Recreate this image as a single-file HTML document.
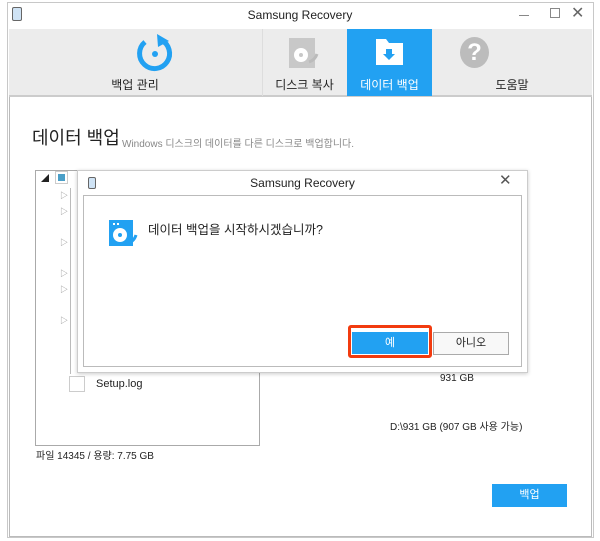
<!DOCTYPE html>
<html><head><meta charset="utf-8"><style>
*{margin:0;padding:0;box-sizing:border-box}
body{width:600px;height:541px;background:#fff;font-family:"Liberation Sans","Noto Sans CJK KR",sans-serif;position:relative;overflow:hidden;color:#222}
.a{position:absolute}
.t{font-size:12px;white-space:nowrap}
.tri{position:absolute;left:60px;font-size:8px;color:#888}
.st{position:absolute;left:70px;width:5px;height:1px;background:#999}
</style></head><body>
<div class="a" style="left:7px;top:2px;width:587px;height:536px;border:1px solid #c8c8c8;background:#fff"></div>
<div class="a" style="left:12px;top:7px;width:10px;height:14px;border:1px solid #666;border-radius:2px;background:#cfe3f5"></div>
<div class="a t" style="left:0;width:600px;text-align:center;top:8px;font-size:12px">Samsung Recovery</div>
<div class="a" style="left:519px;top:15px;width:10px;height:1px;background:#888"></div>
<div class="a" style="left:550px;top:8px;width:10px;height:10px;border:1px solid #888"></div>
<div class="a t" style="left:571px;top:3px;font-size:16px;color:#666">✕</div>
<div class="a" style="left:9px;top:29px;width:583px;height:508px;border:1px solid #bbb;background:#fff"></div>
<div class="a" style="left:9px;top:29px;width:583px;height:68px;background:#ececec;border-bottom:2px solid #ccc"></div>
<div class="a" style="left:262px;top:29px;width:1px;height:67px;background:#ddd"></div>
<div class="a" style="left:347px;top:29px;width:85px;height:67px;background:#22a1f2"></div>
<svg class="a" style="left:133px;top:34px" width="44" height="40" viewBox="0 0 44 40"><path d="M12 8 A15 15 0 1 0 28 6" fill="none" stroke="#22a1f2" stroke-width="5"/><path d="M24 0 L36 7 L25 13Z" fill="#22a1f2"/><circle cx="22" cy="20" r="3" fill="#22a1f2"/></svg>
<div class="a t" style="left:0;width:270px;text-align:center;top:76px;font-size:12px">백업 관리</div>
<svg class="a" style="left:289px;top:38px" width="32" height="32"><rect x="0" y="0" width="26" height="30" fill="#c8c8c8"/><circle cx="12" cy="17" r="7" fill="#fff"/><circle cx="12" cy="17" r="2" fill="#c8c8c8"/><path d="M20 24 q6 -2 8 -8" stroke="#bbb" stroke-width="3" fill="none"/></svg>
<div class="a t" style="left:262px;width:85px;text-align:center;top:76px;font-size:12px">디스크 복사</div>
<svg class="a" style="left:375px;top:37px" width="30" height="30"><path d="M1 2 h10 l3 4 h14 v22 h-27z" fill="#fff"/><path d="M11 12 h6 v5 h3 l-6 6 l-6 -6 h3z" fill="#22a1f2"/></svg>
<div class="a t" style="left:347px;width:85px;text-align:center;top:76px;font-size:12px;color:#fff">데이터 백업</div>
<div class="a" style="left:460px;top:37px;width:29px;height:31px;border-radius:50%;background:#bcbcbc;color:#fff;font-weight:bold;font-size:24px;text-align:center;line-height:31px">?</div>
<div class="a t" style="left:432px;width:160px;text-align:center;top:76px;font-size:12px">도움말</div>
<div class="a t" style="left:32px;top:124px;font-size:18px">데이터 백업</div>
<div class="a t" style="left:122px;top:135px;font-size:10px;color:#888">Windows 디스크의 데이터를 다른 디스크로 백업합니다.</div>
<div class="a" style="left:35px;top:170px;width:225px;height:276px;border:1px solid #aaa"></div>
<div class="a" style="left:55px;top:171px;width:13px;height:13px;border:1px solid #ccc;background:#fff"></div>
<div class="a" style="left:58px;top:174px;width:7px;height:7px;background:#4a9fc8"></div>
<div class="a t" style="left:41px;top:173px;font-size:8px">◢</div>
<div class="tri" style="top:190px">▷</div><div class="tri" style="top:206px">▷</div><div class="tri" style="top:237px">▷</div><div class="tri" style="top:268px">▷</div><div class="tri" style="top:284px">▷</div><div class="tri" style="top:315px">▷</div>
<div class="a" style="left:70px;top:188px;width:1px;height:186px;background:#bbb"></div>
<div class="a" style="left:69px;top:376px;width:16px;height:16px;border:1px solid #ccc"></div>
<div class="a t" style="left:96px;top:378px;font-size:11px">Setup.log</div>
<div class="a t" style="left:36px;top:447px;font-size:10px">파일 14345 / 용량: 7.75 GB</div>
<div class="a t" style="left:440px;top:373px;font-size:10px">931 GB</div>
<div class="a t" style="left:390px;top:418px;font-size:10px">D:\931 GB (907 GB 사용 가능)</div>
<div class="a t" style="left:492px;top:484px;width:75px;height:23px;background:#22a1f2;color:#fff;font-size:11px;text-align:center;line-height:23px">백업</div>
<div class="a" style="left:77px;top:170px;width:451px;height:203px;background:#fff;border:1px solid #ccc;box-shadow:0 1px 4px rgba(0,0,0,.2)"></div>
<div class="a" style="left:88px;top:177px;width:8px;height:12px;border:1px solid #666;border-radius:2px;background:#cfe3f5"></div>
<div class="a t" style="left:77px;width:451px;text-align:center;top:176px;font-size:12px">Samsung Recovery</div>
<div class="a t" style="left:499px;top:171px;font-size:15px;color:#555">✕</div>
<div class="a" style="left:83px;top:195px;width:439px;height:172px;border:1px solid #bbb"></div>
<svg class="a" style="left:109px;top:220px" width="30" height="28"><rect width="24" height="26" fill="#22a1f2"/><circle cx="11" cy="15" r="7" fill="#fff"/><circle cx="11" cy="15" r="2" fill="#22a1f2"/><rect x="4" y="3" width="2" height="2" fill="#fff"/><rect x="8" y="3" width="2" height="2" fill="#fff"/><path d="M17 24 q8 -2 10 -9" stroke="#22a1f2" stroke-width="3" fill="none"/></svg>
<div class="a t" style="left:148px;top:219px;font-size:12.5px">데이터 백업을 시작하시겠습니까?</div>
<div class="a" style="left:348px;top:325px;width:84px;height:33px;border:3px solid #f23b0f;border-radius:3px"></div>
<div class="a t" style="left:352px;top:332px;width:76px;height:22px;background:#22a1f2;color:#fff;font-size:11px;text-align:center;line-height:22px">예</div>
<div class="a t" style="left:433px;top:332px;width:76px;height:23px;background:#f8f8f8;border:1px solid #aaa;font-size:11px;text-align:center;line-height:21px">아니오</div>
</body></html>
